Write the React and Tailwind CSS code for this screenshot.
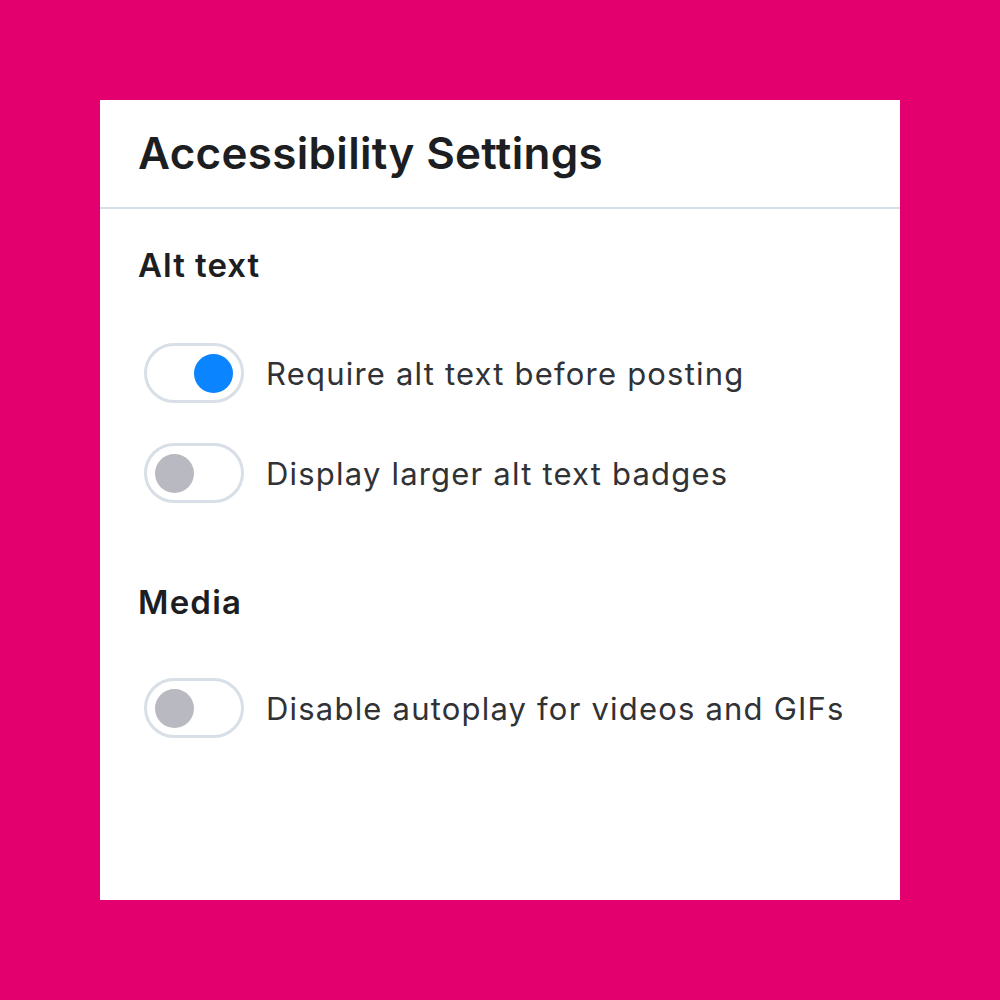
import React from "react";

function Toggle({ on }) {
  return (
    <div className="w-[100px] h-[60px] rounded-full border-[3px] border-[#d8dfe7] bg-white flex items-center px-[8px] shrink-0">
      <div
        className={
          on
            ? "w-[39px] h-[39px] rounded-full bg-[#0a84ff] ml-auto"
            : "w-[39px] h-[39px] rounded-full bg-[#b9b9c1]"
        }
      />
    </div>
  );
}

function Row({ on, label }) {
  return (
    <div className="flex items-center h-[60px] pl-[6px]">
      <Toggle on={on} />
      <span className="ml-[22px] text-[31px] text-[#303236] leading-none tracking-[1.2px]">{label}</span>
    </div>
  );
}

export default function App() {
  return (
    <div
      className="w-[1000px] h-[1000px] bg-[#e3006e] flex items-center justify-center"
      style={{ fontFamily: "Inter, 'Noto Sans', sans-serif" }}
    >
      <div className="w-[800px] h-[800px] bg-white flex flex-col">
        <div className="h-[109px] border-b-2 border-[#d6dee7] flex items-center px-[38px]">
          <h1 className="text-[44px] font-semibold text-[#1c1e22] leading-none tracking-[0.3px] -mt-[2px]">
            Accessibility Settings
          </h1>
        </div>
        <div className="px-[38px]">
          <h2 className="mt-[40px] text-[33px] font-semibold text-[#1c1e22] leading-none tracking-[1px]">Alt text</h2>
          <div className="mt-[61px] flex flex-col gap-[40px]">
            <Row on label="Require alt text before posting" />
            <Row label="Display larger alt text badges" />
          </div>
          <h2 className="mt-[83px] text-[33px] font-semibold text-[#1c1e22] leading-none tracking-[1.2px]">Media</h2>
          <div className="mt-[59px] flex flex-col">
            <Row label="Disable autoplay for videos and GIFs" />
          </div>
        </div>
      </div>
    </div>
  );
}
